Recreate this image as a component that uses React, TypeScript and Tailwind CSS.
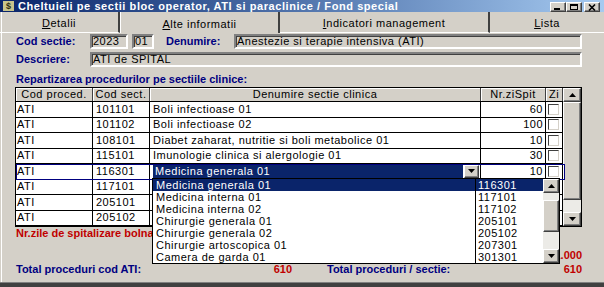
import type { ReactNode } from "react";

const navy = "text-[#000080]";

const rows = [
  { proc: "ATI", sect: "101101", name: "Boli infectioase 01", zile: "60" },
  { proc: "ATI", sect: "101102", name: "Boli infectioase 02", zile: "100" },
  { proc: "ATI", sect: "108101", name: "Diabet zaharat, nutritie si boli metabolice 01", zile: "10" },
  { proc: "ATI", sect: "115101", name: "Imunologie clinica si alergologie 01", zile: "30" },
  { proc: "ATI", sect: "116301", name: "Medicina generala 01", zile: "10", combo: true },
  // the rest sit under the open list
  { proc: "ATI", sect: "117101", name: "", zile: "" },
  { proc: "ATI", sect: "205101", name: "", zile: "" },
  { proc: "ATI", sect: "205102", name: "", zile: "" },
];

const options = [
  ["Medicina generala 01", "116301"],
  ["Medicina interna 01", "117101"],
  ["Medicina interna 02", "117102"],
  ["Chirurgie generala 01", "205101"],
  ["Chirurgie generala 02", "205102"],
  ["Chirurgie artoscopica 01", "207301"],
  ["Camera de garda 01", "301301"],
];

function Arrow({ up }: { up?: boolean }) {
  return (
    <svg width="7" height="4" viewBox="0 0 7 4">
      <polygon points={up ? "3.5,0 7,4 0,4" : "0,0 7,0 3.5,4"} fill="#000" />
    </svg>
  );
}

/** Raised win2k button face. */
function Btn({ className = "", children }: { className?: string; children?: ReactNode }) {
  return (
    <div
      className={`flex items-center justify-center border border-t-white border-l-white border-r-[#404040] border-b-[#404040] bg-[#d4d0c8] shadow-[inset_-1px_-1px_0_#808080] ${className}`}
    >
      {children}
    </div>
  );
}

function Field({ className = "", children }: { className?: string; children?: ReactNode }) {
  return (
    <div
      className={`flex h-full items-center border-2 border-t-[#808080] border-l-[#808080] border-r-white border-b-white bg-[#d4d0c8] pl-[1px] tracking-[0.5px] shadow-[inset_1px_1px_0_#404040] ${className}`}
    >
      {children}
    </div>
  );
}

function Check() {
  return <div className="ml-[2px] h-[11px] w-[11px] border border-t-[#404040] border-l-[#404040] border-r-[#d4d0c8] border-b-[#d4d0c8] bg-white" />;
}

function Tab({ w, label, hot, active }: { w: string; label: string; hot: number; active?: boolean }) {
  return (
    <div
      className={`flex h-full items-center justify-center pt-[3px] tracking-[0.5px] ${w} ${
        active ? "border-l border-l-white" : "border-b border-b-white"
      } border-r-2 border-r-[#404040]`}
    >
      {label.slice(0, hot)}
      <u className="underline-offset-1">{label[hot]}</u>
      {label.slice(hot + 1)}
    </div>
  );
}

export default function App() {
  return (
    <div className="relative flex h-[287px] w-[604px] flex-col overflow-hidden bg-[#d4d0c8] font-['Liberation_Sans',Arial,sans-serif] text-[11px] leading-none text-black shadow-[inset_1px_0_0_#d4d0c8,inset_2px_0_0_#fff]">
      {/* title bar */}
      <div className="flex h-[12px] shrink-0 items-center bg-linear-to-r from-[#0a246a] to-[#a6caf0] pl-[3px] pr-[4px]">
        <span className="flex h-[10px] w-[11px] items-center justify-center bg-[#c8c48c] text-[9px] font-bold text-[#303010]">$</span>
        <span className="ml-[4px] font-bold tracking-[0.57px] text-white">
          Cheltuieli pe sectii bloc operator, ATI si paraclinice / Fond special
        </span>
        <div className="ml-auto flex self-end">
          <Btn className="h-[10px] w-[16px] items-end justify-start pb-[1px] pl-[3px]">
            <div className="h-[2px] w-[6px] bg-black" />
          </Btn>
          <Btn className="h-[10px] w-[16px]">
            <div className="h-[6px] w-[8px] border border-t-2 border-black" />
          </Btn>
          <Btn className="ml-[2px] h-[10px] w-[16px]">
            <svg width="8" height="7" viewBox="0 0 8 7">
              <path d="M1 0.5 L7 6.5 M7 0.5 L1 6.5" stroke="#000" strokeWidth="1.6" />
            </svg>
          </Btn>
        </div>
      </div>

      {/* tabs */}
      <div className="flex h-[21px] shrink-0">
        <Tab w="w-[120px]" label="Detalii" hot={0} />
        <Tab w="w-[160px]" label="Alte informatii" hot={0} active />
        <Tab w="w-[210px]" label="Indicatori management" hot={0} />
        <div className="flex h-full flex-1 items-center justify-center border-b border-b-white pt-[3px] tracking-[0.5px]">
          <u className="underline-offset-1">L</u>ista
        </div>
      </div>

      <div className="flex flex-1 flex-col pl-[16px] pr-[22px]">
        <div className="mt-[1px] flex h-[15px] items-center">
          <span className={`w-[74px] font-bold ${navy}`}>Cod sectie:</span>
          <Field className="w-[38px]">2023</Field>
          <Field className="ml-[4px] w-[22px]">01</Field>
          <span className={`ml-[12px] w-[68px] font-bold ${navy}`}>Denumire:</span>
          <Field className="w-[348px]">Anestezie si terapie intensiva (ATI)</Field>
        </div>
        <div className="mt-[3px] flex h-[15px] items-center">
          <span className={`w-[74px] font-bold ${navy}`}>Descriere:</span>
          <Field className="w-[492px]">ATI de SPITAL</Field>
        </div>

        <div className={`mt-[6px] flex h-[13px] items-center font-bold ${navy}`}>
          Repartizarea procedurilor pe sectiile clinice:
        </div>

        {/* grid */}
        <div className="relative ml-[-1px] mt-[1px] flex h-[140px] w-[567px] shrink-0 border border-black bg-white">
          <div className="flex w-[547px] flex-col">
            <div className="flex h-[14px] border-b border-black bg-[#d4d0c8] tracking-[0.5px]">
              <div className="flex w-[77px] items-center justify-center border-r border-[#404040] shadow-[inset_1px_1px_0_#fff]">Cod proced.</div>
              <div className="flex w-[57px] items-center justify-center border-r border-[#404040] shadow-[inset_1px_1px_0_#fff]">Cod sect.</div>
              <div className="flex w-[331px] items-center justify-center border-r border-[#404040] shadow-[inset_1px_1px_0_#fff]">Denumire sectie clinica</div>
              <div className="flex w-[65px] items-center justify-center border-r border-[#404040] shadow-[inset_1px_1px_0_#fff]">Nr.ziSpit</div>
              <div className="flex w-[17px] items-center justify-center border-r border-[#404040] shadow-[inset_1px_1px_0_#fff]">Zi</div>
            </div>
            {rows.map((r) => (
              <div key={r.sect} className="relative flex h-[15.5px] tracking-[0.5px]">
                <div className="flex w-[77px] items-center border-r border-b border-black pl-[1px]">{r.proc}</div>
                <div className="flex w-[57px] items-center border-r border-b border-black pl-[3px]">{r.sect}</div>
                <div className="flex w-[331px] items-center border-r border-b border-black pl-[3px]">
                  {r.combo ? (
                    <div className="flex h-full w-full items-center py-[1px] pr-[1px]">
                      <div className="flex h-full flex-1 items-center bg-[#0a246a] pl-[2px] text-white">{r.name}</div>
                      <Btn className="ml-[1px] h-full w-[15px]">
                        <Arrow />
                      </Btn>
                    </div>
                  ) : (
                    r.name
                  )}
                </div>
                <div className="flex w-[65px] items-center justify-end border-r border-b border-black pr-[2px]">{r.zile}</div>
                <div className="flex w-[17px] items-center border-r border-b border-black">
                  <Check />
                </div>
                {r.combo && <div className="pointer-events-none absolute inset-x-0 top-0 bottom-0 w-[549px] border border-[#000080]" />}
              </div>
            ))}
          </div>
          <div className="flex w-[18px] flex-col bg-[#ecebe7]">
            <Btn className="h-[14px]">
              <Arrow up />
            </Btn>
            <Btn className="h-[98px]" />
            <div className="flex-1" />
            <Btn className="h-[14px]">
              <Arrow />
            </Btn>
          </div>
        </div>

        <div className="flex h-[12px] w-[136px] items-center overflow-hidden whitespace-nowrap font-bold text-[#c00000]">
          Nr.zile de spitalizare bolnavi
        </div>
        <div className="mt-[10px] flex h-[12px] items-center justify-end font-bold text-[#c00000]">1.000</div>
        <div className="mt-[2px] flex h-[12px] items-center font-bold">
          <div className="flex w-[276px] justify-between">
            <span className={navy}>Total proceduri cod ATI:</span>
            <span className="text-[#c00000]">610</span>
          </div>
          <div className="ml-[35px] flex flex-1 justify-between">
            <span className={navy}>Total proceduri / sectie:</span>
            <span className="text-[#c00000]">610</span>
          </div>
        </div>
      </div>

      <div className="h-[5px] shrink-0 border-t border-[#808080] bg-[#404040]" />

      {/* open combo list */}
      <div className="absolute left-[152px] top-[178px] flex h-[86px] w-[408px] border border-black bg-white tracking-[0.5px]">
        <div className="flex flex-1 flex-col">
          {options.map(([n, c], i) => (
            <div key={c} className={`flex h-[12px] ${i === 0 ? "bg-[#0a246a] text-white" : ""}`}>
              <div className="flex w-[323px] items-center border-r border-black pl-[3px]">{n}</div>
              <div className="flex flex-1 items-center pl-[2px]">{c}</div>
            </div>
          ))}
        </div>
        <div className="flex w-[16px] flex-col bg-[#ecebe7]">
          <Btn className="h-[14px]">
            <Arrow up />
          </Btn>
          <div className="h-[7px]" />
          <Btn className="h-[32px]" />
          <div className="flex-1" />
          <Btn className="h-[14px]">
            <Arrow />
          </Btn>
        </div>
      </div>
    </div>
  );
}
